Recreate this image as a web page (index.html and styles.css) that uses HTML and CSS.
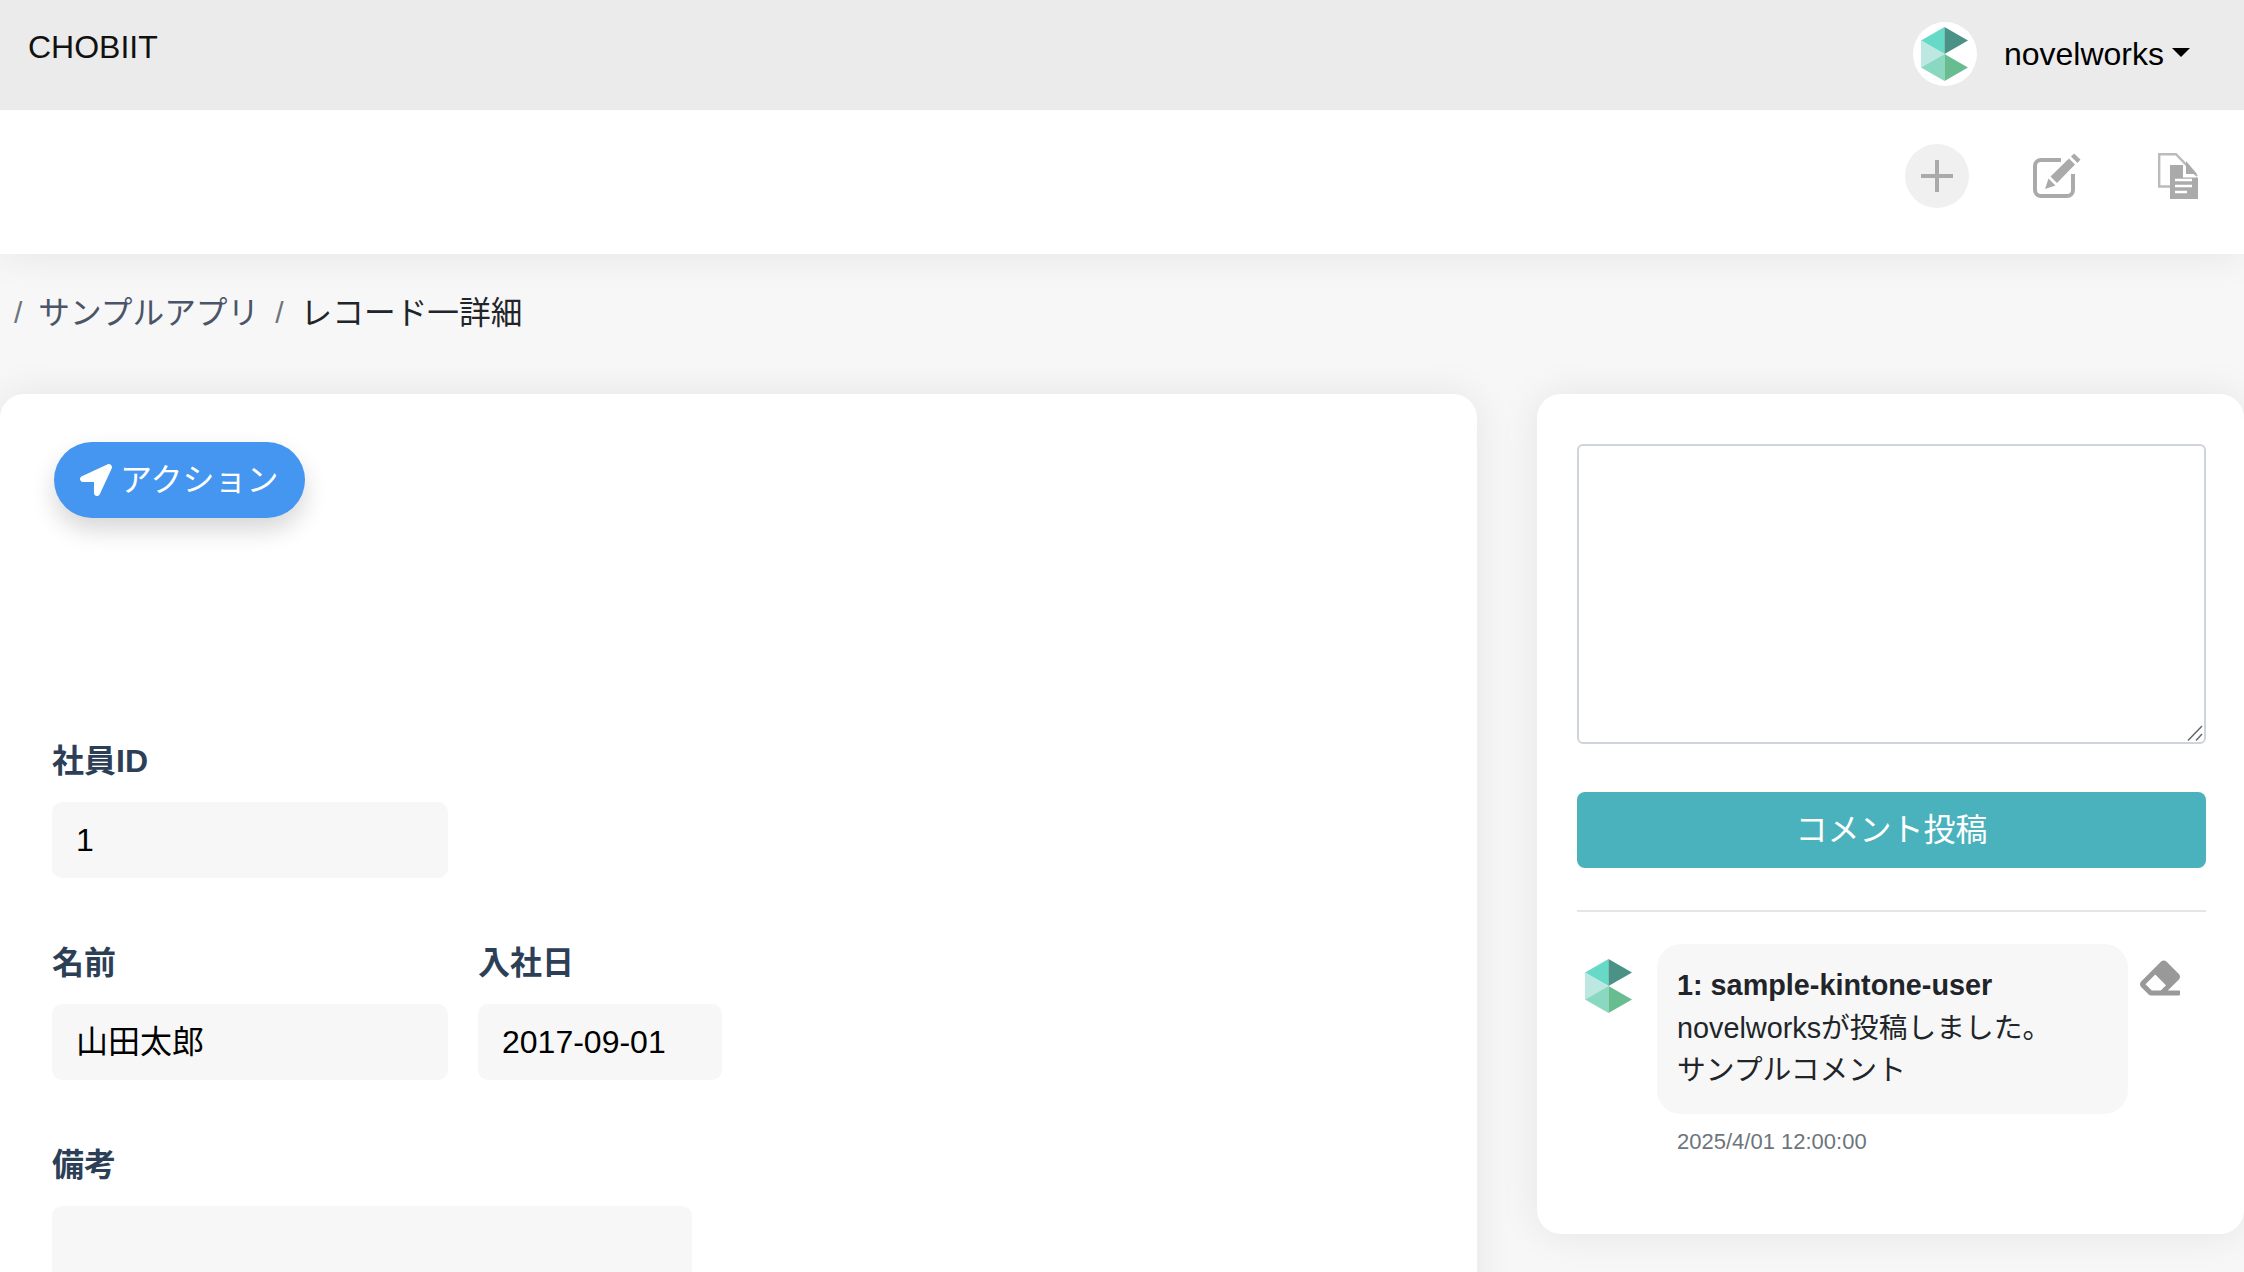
FILE: index.html
```html
<!DOCTYPE html>
<html lang="ja">
<head>
<meta charset="utf-8">
<title>CHOBIIT</title>
<link rel="stylesheet" href="styles.css">
</head>
<body>
<header class="topbar">
  <div class="brand">CHOBIIT</div>
  <div class="user">
    <span class="avatar">
      <svg class="logo" viewBox="0 0 47 54"><use href="#hex"/></svg>
    </span>
    <span class="user-name">novelworks</span>
    <span class="caret"></span>
  </div>
</header>

<svg class="defs" width="0" height="0">
  <defs>
    <g id="hex">
      <polygon points="23.5,0 0,13.5 23.5,27" fill="#66d9c7"/>
      <polygon points="23.5,0 47,13.5 23.5,27" fill="#4a9186"/>
      <polygon points="0,13.5 23.5,27 0,40.5" fill="#bde8e1"/>
      <polygon points="23.5,27 0,40.5 23.5,54" fill="#8ad8c0"/>
      <polygon points="23.5,27 47,40.5 23.5,54" fill="#68bd90"/>
    </g>
  </defs>
</svg>

<div class="toolbar">
  <button class="tool tool-add" type="button" aria-label="追加">
    <svg class="icon-plus" viewBox="0 0 32 32"><path d="M14 0h4v14h14v4H18v14h-4V18H0v-4h14z"/></svg>
  </button>
  <button class="tool" type="button" aria-label="編集">
    <svg class="icon-edit" viewBox="0 0 48 46">
      <path class="edit-box" d="M28 7H8a6 6 0 0 0-6 6v24a6 6 0 0 0 6 6h26a6 6 0 0 0 6-6V21"/>
      <path class="edit-pen" d="M12 36l3.5-10.500 7 7zM17.500 23.500L36 5.500l6 6-18 18.500zM38 3.500l3-3 6.500 6-3 3.500z"/>
    </svg>
  </button>
  <button class="tool" type="button" aria-label="複製">
    <svg class="icon-copy" viewBox="0 0 40 46">
      <path class="copy-back" d="M12 33.500H1.200V1.200H18L39 23"/>
      <path class="copy-front" d="M12 12h13v12.500h15V46H12z"/>
      <path class="copy-front" d="M28 8l11 13H28z"/>
      <path class="copy-lines" d="M17 27h17M17 33h17M17 39h12"/>
    </svg>
  </button>
</div>

<nav class="crumbs">
  <span class="crumb-sep">/</span>
  <a class="crumb-link">サンプルアプリ</a>
  <span class="crumb-sep">/</span>
  <span class="crumb-current">レコード一詳細</span>
</nav>

<main class="content">
  <section class="card card-form">
    <button class="action" type="button">
      <svg class="icon-arrow" viewBox="0 0 512 512"><path d="M444.520 3.520L28.740 195.420c-47.970 22.390-31.980 92.750 19.190 92.750h175.910v175.910c0 51.170 70.360 67.170 92.750 19.190l191.900-415.780c15.990-38.390-25.590-79.970-63.970-63.970z"/></svg>
      <span>アクション</span>
    </button>

    <div class="form-row">
      <div class="field">
        <label class="field-label">社員ID</label>
        <div class="field-value w-396">1</div>
      </div>
    </div>
    <div class="form-row">
      <div class="field">
        <label class="field-label">名前</label>
        <div class="field-value w-396">山田太郎</div>
      </div>
      <div class="field">
        <label class="field-label">入社日</label>
        <div class="field-value w-244">2017-09-01</div>
      </div>
    </div>
    <div class="form-row">
      <div class="field">
        <label class="field-label">備考</label>
        <div class="field-value w-640 tall"></div>
      </div>
    </div>
  </section>

  <aside class="card card-comments">
    <div class="input-wrap">
      <textarea class="comment-input"></textarea>
      <svg class="grip" viewBox="0 0 16 16"><path d="M1 15.500L15 1M9 15.500L15 9"/></svg>
    </div>
    <button class="submit" type="button">コメント投稿</button>
    <hr class="divider">
    <div class="comment">
      <svg class="comment-avatar" viewBox="0 0 47 54"><use href="#hex"/></svg>
      <div class="comment-body">
        <div class="bubble">
          <div class="comment-author">1: sample-kintone-user</div>
          <div>novelworksが投稿しました。</div>
          <div>サンプルコメント</div>
        </div>
        <div class="comment-time">2025/4/01 12:00:00</div>
      </div>
      <svg class="icon-eraser" viewBox="0 0 512 512"><path d="M497.941 273.941c18.745-18.745 18.745-49.137 0-67.882l-160-160c-18.745-18.745-49.137-18.745-67.882 0l-256 256c-18.745 18.745-18.745 49.137 0 67.882l96 96A48.004 48.004 0 0 0 144 480h356c6.627 0 12-5.373 12-12v-40c0-6.627-5.373-12-12-12H355.883l142.058-142.059zm-302.627-62.627l137.373 137.373L265.373 416H150.628l-80-80 124.686-124.686z"/></svg>
    </div>
  </aside>
</main>
</body>
</html>
```
FILE: styles.css
```css
* { box-sizing: border-box; }

html, body {
  height: 100%;
  margin: 0;
  overflow: hidden;
}

body {
  background: #f7f7f7;
  color: #212529;
  font-family: "Liberation Sans", "Noto Sans CJK JP", sans-serif;
  font-size: 32px;
  line-height: 48px;
}

.defs { display: block; height: 0; }

.topbar {
  position: relative;
  z-index: 1;
  display: flex;
  justify-content: space-between;
  height: 110px;
  padding: 23px 54px 0 28px;
  background: #ebebeb;
  color: #111;
}

.brand { height: 48px; }

.user {
  display: flex;
  align-items: center;
  height: 64px;
  margin-top: -1px;
  color: #000;
}

.avatar {
  display: flex;
  align-items: center;
  justify-content: center;
  width: 64px;
  height: 64px;
  margin-right: 27px;
  border-radius: 50%;
  background: #fff;
}

.logo { width: 47px; height: 54px; }

.caret {
  width: 0;
  height: 0;
  margin-left: 8px;
  margin-top: -4px;
  border-left: 9px solid transparent;
  border-right: 9px solid transparent;
  border-top: 9px solid #000;
}

.toolbar {
  position: relative;
  display: flex;
  justify-content: flex-end;
  align-items: flex-start;
  height: 144px;
  padding: 34px 46px 0 0;
  background: #fff;
  box-shadow: 0 0 40px rgba(0, 0, 0, 0.08);
}

.tool {
  display: flex;
  align-items: center;
  justify-content: center;
  margin: 0;
  padding: 0;
  border: 0;
  background: none;
}

.tool-add {
  width: 64px;
  height: 64px;
  margin-right: 64px;
  border-radius: 50%;
  background: #f0f0f0;
}

.icon-plus { width: 32px; height: 32px; fill: #aaa; }

.icon-edit { width: 48px; height: 46px; margin-top: 9px; margin-right: 77px; }
.edit-box { fill: none; stroke: #aaa; stroke-width: 4; }
.edit-pen { fill: #aaa; }

.icon-copy { width: 40px; height: 46px; margin-top: 9px; }
.copy-back { fill: none; stroke: #bbb; stroke-width: 2.4; }
.copy-front { fill: #aaa; }
.copy-lines { fill: none; stroke: #fff; stroke-width: 2.4; }

.crumbs {
  display: flex;
  align-items: center;
  height: 140px;
  padding: 0 0 22px 14px;
  font-size: 31.7px;
}

.crumb-sep { color: #6c757d; font-size: 30px; }
.crumb-link { margin: 0 16px 0 16px; color: #4a5568; }
.crumb-current { margin-left: 17px; color: #212529; }

.content {
  display: flex;
  align-items: flex-start;
  gap: 60px;
}

.card {
  background: #fff;
  border-radius: 24px;
  box-shadow: 0 0 40px rgba(0, 0, 0, 0.08);
}

.card-form {
  flex: 0 0 1477px;
  height: 1200px;
  padding: 48px 52px;
}

.action {
  display: flex;
  align-items: center;
  gap: 8px;
  width: 251px;
  height: 76px;
  margin: 0 0 219px 2px;
  padding: 0 0 0 26px;
  border: 0;
  border-radius: 38px;
  background: #4496f0;
  box-shadow: 0 12px 24px rgba(0, 0, 0, 0.16);
  color: #fff;
  font: inherit;
}

.icon-arrow { flex: none; width: 32px; height: 32px; fill: #fff; }

.form-row {
  display: flex;
  gap: 30px;
  margin-bottom: 61px;
}

.field-label {
  display: block;
  margin-bottom: 17px;
  color: #2d3f56;
  font-weight: 700;
}

.field-value {
  height: 76px;
  padding: 14px 24px;
  border-radius: 10px;
  background: #f7f7f7;
  color: #000;
}

.w-396 { width: 396px; }
.w-244 { width: 244px; }
.w-640 { width: 640px; }
.tall { height: 200px; }

.card-comments {
  flex: 1;
  height: 840px;
  padding: 50px 38px 0 40px;
}

.input-wrap { position: relative; }

.comment-input {
  display: block;
  width: 100%;
  height: 300px;
  border: 2px solid #ced4da;
  border-radius: 6px;
  background: #fff;
  resize: none;
}

.grip {
  position: absolute;
  right: 3px;
  bottom: 3px;
  width: 16px;
  height: 16px;
  fill: none;
  stroke: #666;
  stroke-width: 1.5;
}

.submit {
  display: block;
  width: 100%;
  height: 76px;
  margin-top: 48px;
  border: 0;
  border-radius: 8px;
  background: #4ab2bc;
  color: #fff;
  font: inherit;
}

.divider {
  height: 2px;
  margin: 42px 0 32px;
  border: 0;
  background: #e5e5e5;
}

.comment {
  display: flex;
  align-items: flex-start;
}

.comment-avatar {
  flex: none;
  width: 47px;
  height: 54px;
  margin: 15px 25px 0 8px;
}

.comment-body { flex: 0 0 471px; }

.bubble {
  height: 170px;
  padding: 20px 20px 0;
  border-radius: 24px;
  background: #f7f7f7;
  font-size: 28.8px;
  line-height: 42.6px;
}

.comment-author { font-weight: 700; }

.comment-time {
  margin-top: 10px;
  padding-left: 20px;
  color: #6c757d;
  font-size: 22px;
  line-height: 36px;
}

.icon-eraser {
  flex: none;
  width: 40px;
  height: 40px;
  margin: 14px 0 0 12px;
  fill: #999;
}
```
